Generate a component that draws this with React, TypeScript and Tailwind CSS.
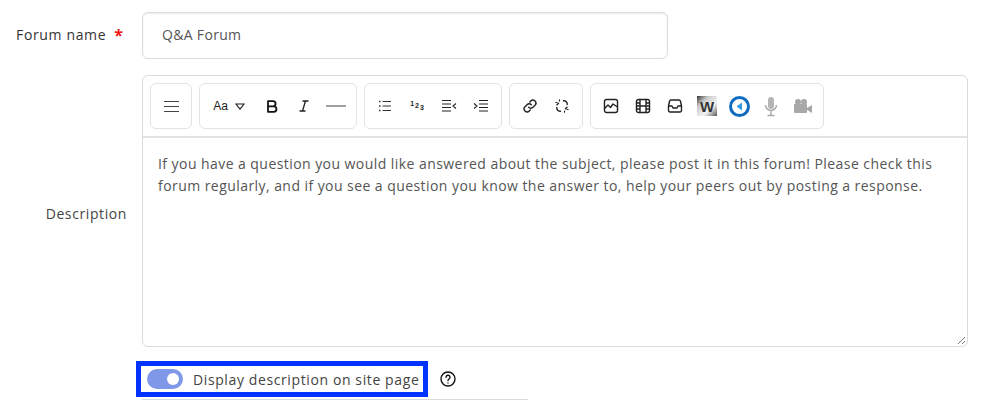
import React from "react";

const S = ({ children, w = 16, h = 16, vb = "0 0 16 16" }: { children: React.ReactNode; w?: number; h?: number; vb?: string }) => (
  <svg width={w} height={h} viewBox={vb} fill="none" stroke="#222" strokeWidth="1.4" strokeLinecap="round" strokeLinejoin="round">
    {children}
  </svg>
);

const Btn = ({ children, w = "w-8" }: { children: React.ReactNode; w?: string }) => (
  <div className={`${w} h-9 flex items-center justify-center shrink-0`}>{children}</div>
);

const Group = ({ children }: { children: React.ReactNode }) => (
  <div className="flex items-center h-[46px] px-[4px] border border-[#e3e3e3] rounded-md bg-white">{children}</div>
);

const SmallList = () => (
  <svg width="16" height="16" viewBox="0 0 16 16" fill="none" stroke="#333" strokeWidth="1.1">
    <path d="M5.500 3.500h8.500M5.500 8h8.500M5.500 12.500h8.500" />
    <path d="M2 3.500h1.500M2 8h1.500M2 12.500h1.500" strokeWidth="1.300" />
  </svg>
);

export default function App() {
  return (
    <div className="w-[995px] h-[400px] overflow-hidden bg-white pt-3 text-[14px] text-[#444] font-['Open_Sans','Liberation_Sans',sans-serif]">
      <div className="flex h-[47px] items-center">
        <div className="w-[142px] pl-4 text-[#333] font-medium tracking-[0.65px] flex items-center pb-[2px]">
          Forum name<span className="ml-[8px] text-[#f01414] text-[16px] font-bold leading-none">*</span>
        </div>
        <div className="w-[526px] h-[47px] border border-[#dcdcdc] rounded-md shadow-[inset_0_1px_2px_rgba(0,0,0,0.08)] flex items-center pl-[19px] text-[#555] pb-[2px] tracking-[0.32px]">
          Q&amp;A Forum
        </div>
      </div>

      <div className="flex mt-4">
        <div className="w-[127px] flex items-center justify-end text-[#444] tracking-[0.6px] pt-[5px]">Description</div>
        <div className="ml-[15px] w-[826px] h-[272px] border border-[#dcdcdc] rounded-md flex flex-col relative">
          <div className="h-[62px] border-b-2 border-[#e3e3e3] flex items-start pt-[7px] pl-[7px] gap-[7px] shrink-0">
            <div className="flex items-center justify-center w-[42px] h-[46px] border border-[#e3e3e3] rounded-md shrink-0">
              <svg width="15" height="13" viewBox="0 0 15 13" fill="none" stroke="#444" strokeWidth="1.100">
                <path d="M0 1.500h15M0 6.500h15M0 11.500h15" />
              </svg>
            </div>
            <Group>
              <Btn w="w-[52px]">
                <span className="flex items-center gap-[7px] mr-[2px]">
                  <span className="text-[12px] text-[#222] font-['Liberation_Sans',sans-serif] leading-none">Aa</span>
                  <svg width="10" height="7" viewBox="0 0 10 7" fill="none" stroke="#222" strokeWidth="1.200"><path d="M1 1h8L5 6z" /></svg>
                </span>
              </Btn>
              <Btn>
                <svg width="12" height="13" viewBox="0 0 12 13" fill="none" stroke="#111" strokeWidth="1.800" strokeLinejoin="round">
                  <path d="M2 1.200h5a2.600 2.600 0 0 1 0 5.200H2zM2 6.400h5.800a2.700 2.700 0 0 1 0 5.400H2z" />
                </svg>
              </Btn>
              <Btn>
                <svg width="10" height="12" viewBox="0 0 10 12" fill="none" stroke="#222" strokeWidth="1.300">
                  <path d="M3.500 1h6M.5 11h6M6.500 1 3.500 11" />
                </svg>
              </Btn>
              <Btn>
                <div className="w-5 h-[2px] bg-[#a0a0a0]" />
              </Btn>
            </Group>
            <Group>
              <Btn><SmallList /></Btn>
              <Btn>
                <span className="flex items-start h-3 text-[7px] font-bold text-[#222] font-['Liberation_Sans',sans-serif] leading-none">
                  <span>1</span><span className="mt-[2px] ml-[1px]">2</span><span className="mt-1 ml-[1px]">3</span>
                </span>
              </Btn>
              <Btn>
                <svg width="16" height="16" viewBox="0 0 16 16" fill="none" stroke="#222" strokeWidth="1.100">
                  <path d="M1 2.500h9M1 6h9M1 9.500h9M1 13h9M15 5.500 12 8l3 2.500" />
                </svg>
              </Btn>
              <Btn>
                <svg width="16" height="16" viewBox="0 0 16 16" fill="none" stroke="#222" strokeWidth="1.100">
                  <path d="M6 2.500h9M6 6h9M6 9.500h9M6 13h9M1 5.500 4 8l-3 2.500" />
                </svg>
              </Btn>
            </Group>
            <Group>
              <Btn>
                <S><path d="M6.700 9.300a3 3 0 0 0 4.300 0l2-2a3 3 0 0 0-4.300-4.300l-.9.900M9.300 6.700a3 3 0 0 0-4.300 0l-2 2A3 3 0 0 0 7.300 13l.9-.9" /></S>
              </Btn>
              <Btn>
                <S>
                  <path d="M9.500 2.800a3.200 3.200 0 0 1 3.700 3.700M6.500 13.200a3.200 3.200 0 0 1-3.700-3.700M3 6.800l1.500-1.500M11.500 10.700 13 9.200" />
                  <path d="M5.500 1.800v1.200M1.800 4.500h1.200M10.500 13v1.200M13 11.500h1.200" strokeWidth="1.100" />
                </S>
              </Btn>
            </Group>
            <Group>
              <Btn>
                <S><rect x="1.500" y="1.500" width="13" height="13" rx="2" /><path d="M1.500 10.500l3.500-3.500 2.500 2.500L10 6l4.500 3" /></S>
              </Btn>
              <Btn>
                <S><rect x="1.500" y="1.500" width="13" height="13" rx="2" /><path d="M5 1.500v13M11 1.500v13M1.500 5h3.500M1.500 8h13M1.500 11h3.500M11 5h3.500M11 11h3.500" /></S>
              </Btn>
              <Btn>
                <S><path d="M4 2h8a1.500 1.500 0 0 1 1.400 1L14.500 8v4.500A1.500 1.500 0 0 1 13 14H3a1.500 1.500 0 0 1-1.500-1.500V8l1.100-5A1.500 1.500 0 0 1 4 2zM1.500 8H5l1 2h4l1-2h3.500" /></S>
              </Btn>
              <Btn>
                <div className="w-5 h-5 bg-[linear-gradient(135deg,#333_0%,#ccc_30%,#f4f4f4_65%,#555_100%)] flex items-center justify-center">
                  <span className="text-[15px] font-bold text-[#333] leading-none font-['Liberation_Sans',sans-serif]">W</span>
                </div>
              </Btn>
              <Btn>
                <svg width="21" height="21" viewBox="0 0 21 21">
                  <circle cx="10.500" cy="10.500" r="9" fill="#fff" stroke="#0f6cbf" strokeWidth="3" />
                  <path d="M13 6.500v8L7.500 10.500z" fill="#2f9be8" />
                </svg>
              </Btn>
              <Btn>
                <svg width="14" height="21" viewBox="0 0 14 21" fill="none">
                  <rect x="4" y="1" width="6" height="12" rx="3" fill="#b5b5b5" />
                  <path d="M1.500 9a5.500 5.500 0 0 0 11 0M7 15v4M3.500 19.500h7" stroke="#aaa" strokeWidth="1.500" />
                </svg>
              </Btn>
              <Btn>
                <svg width="20" height="16" viewBox="0 0 20 16" fill="#a8a8a8">
                  <circle cx="5" cy="4" r="3" />
                  <circle cx="11" cy="4" r="3" />
                  <rect x="1" y="6" width="13" height="9" rx="1" />
                  <path d="M14 10l5-3v8l-5-3z" />
                </svg>
              </Btn>
            </Group>
          </div>
          <div className="px-[15px] pt-[15px] text-[#555] leading-[22px] tracking-[0.44px]">
            If you have a question you would like answered about the subject, please post it in this forum! Please check this forum regularly, and if you see a question you know the answer to, help your peers out by posting a response.
          </div>
          <svg className="absolute right-[1px] bottom-[1px]" width="10" height="10" viewBox="0 0 10 10" stroke="#777" strokeWidth="1">
            <path d="M9 2 2 9M9 6 6 9" />
          </svg>
        </div>
      </div>

      <div className="flex items-center mt-[14px] ml-[136px]">
        <div className="w-[292px] h-[36px] border-[5px] border-[#0033ff] flex items-center pl-[6px]">
          <div className="w-9 h-5 rounded-full bg-[#8098e8] flex items-center justify-end pr-1 shrink-0">
            <div className="w-3 h-3 rounded-full bg-white" />
          </div>
          <span className="ml-[10px] whitespace-nowrap tracking-[0.61px]">Display description on site page</span>
        </div>
        <svg className="ml-3" width="16" height="16" viewBox="0 0 16 16" fill="none" stroke="#111" strokeWidth="1.400" strokeLinecap="round">
          <circle cx="8" cy="8" r="7" />
          <path d="M6 6.300a2 2 0 1 1 3 1.700c-.7.400-1 .8-1 1.500" />
          <path d="M8 12v.1" />
        </svg>
      </div>
      <div className="ml-[142px] w-[386px] h-px bg-[#dcdcdc] mt-[2px]" />
    </div>
  );
}
